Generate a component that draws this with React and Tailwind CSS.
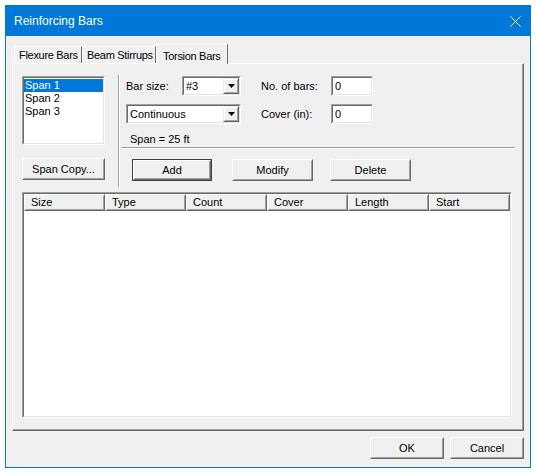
import React from 'react'

const font = { fontFamily: '"Liberation Sans", Arial, sans-serif' }

const Raised = ({ className = '', children, isDefault = false }) => {
  const inner = (
    <div className="w-full h-full border border-t-white border-l-white border-r-[#696969] border-b-[#696969]">
      <div className="w-full h-full border border-t-[#f0f0f0] border-l-[#f0f0f0] border-r-[#a0a0a0] border-b-[#a0a0a0] flex items-center justify-center text-[11px] text-black leading-none whitespace-nowrap">
        {children}
      </div>
    </div>
  )
  if (isDefault) {
    return <div className={`border border-[#404040] bg-[#f0f0f0] ${className}`}>{inner}</div>
  }
  return <div className={`bg-[#f0f0f0] ${className}`}>{inner}</div>
}

const Sunken = ({ className = '', children }) => (
  <div className={`border border-t-[#a0a0a0] border-l-[#a0a0a0] border-r-white border-b-white ${className}`}>
    <div className="w-full h-full border border-t-[#696969] border-l-[#696969] border-r-[#e3e3e3] border-b-[#e3e3e3] bg-white">
      {children}
    </div>
  </div>
)

const Combo = ({ value, width }) => (
  <Sunken className={`${width} h-[20px]`}>
    <div className="flex h-full items-center">
      <span className="flex-1 pl-[2px] text-[11px] leading-none">{value}</span>
      <div className="w-[16px] h-[16px] border border-t-[#f0f0f0] border-l-[#f0f0f0] border-r-[#696969] border-b-[#696969]">
        <div className="w-full h-full border border-t-white border-l-white border-r-[#a0a0a0] border-b-[#a0a0a0] bg-[#f0f0f0] flex items-center justify-center">
          <svg width="7" height="4" viewBox="0 0 7 4">
            <path d="M0 0h7L3.5 4z" fill="#000" />
          </svg>
        </div>
      </div>
    </div>
  </Sunken>
)

const TextBox = ({ value }) => (
  <Sunken className="w-[42px] h-[20px]">
    <div className="flex h-full items-center pl-[2px] text-[11px] leading-none">{value}</div>
  </Sunken>
)

const columns = ['Size', 'Type', 'Count', 'Cover', 'Length', 'Start']

export default function App() {
  return (
    <div className="w-[536px] h-[473px] bg-white pt-[5px] pl-[5px] text-black whitespace-nowrap" style={font}>
      <div className="w-[526px] h-[463px] border border-[#0078d7] bg-[#f0f0f0] flex flex-col">
        {/* Title bar */}
        <div className="h-[30px] bg-[#0078d7] flex items-center justify-between pl-[8px] pr-[9px]">
          <span className="text-white text-[12px]">Reinforcing Bars</span>
          <svg width="11" height="11" viewBox="0 0 11 11">
            <path d="M0.5 0.5l10 10M10.5 0.5l-10 10" stroke="#fff" strokeWidth="1" />
          </svg>
        </div>

        {/* Tabs */}
        <div className="flex items-end h-[19px] mt-[8px] ml-[6px] text-[11px] tracking-[-0.3px]">
          <div className="ml-[2px] w-[68px] h-[17px] border-t border-l border-t-white border-l-white border-r border-r-[#696969] flex items-center pl-[4px]">
            Flexure Bars
          </div>
          <div className="w-[74px] h-[17px] border-t border-l border-t-white border-l-white border-r border-r-[#696969] flex items-center pl-[4px]">
            Beam Stirrups
          </div>
          <div className="relative z-10 -mb-px w-[72px] h-[20px] bg-[#f0f0f0] border-t border-l border-t-white border-l-white border-r border-r-[#696969] flex items-start pt-[3px] pl-[6px]">
            Torsion Bars
          </div>
        </div>

        {/* Panel */}
        <div className="ml-[6px] w-[512px] h-[368px] border-t border-l border-t-white border-l-white border-r border-b border-r-[#696969] border-b-[#696969]">
          <div className="w-full h-full border-r border-b border-r-[#a0a0a0] border-b-[#a0a0a0] pl-[9px] pt-[12px] text-[11px]">
            <div className="flex h-[116px]">
              {/* Left column */}
              <div className="w-[83px] flex flex-col">
                <Sunken className="w-[83px] h-[69px]">
                  <div className="pt-px leading-[13px]">
                    <div className="bg-[#0078d7] text-white pl-[1px] h-[13px]">Span 1</div>
                    <div className="pl-[1px] h-[13px]">Span 2</div>
                    <div className="pl-[1px] h-[13px]">Span 3</div>
                  </div>
                </Sunken>
                <Raised className="mt-[13px] w-[83px] h-[22px]">Span Copy...</Raised>
              </div>

              {/* Vertical separator */}
              <div className="ml-[13px] -mt-px w-[2px] h-[112px] border-l border-l-[#a0a0a0] border-r border-r-white" />

              {/* Right section */}
              <div className="flex flex-col w-[395px]">
                <div className="flex items-center pl-[6px] h-[20px]">
                  <span className="w-[56px]">Bar size:</span>
                  <Combo value="#3" width="w-[59px]" />
                  <span className="ml-[20px] w-[70px]">No. of bars:</span>
                  <TextBox value="0" />
                </div>
                <div className="flex items-center pl-[6px] h-[20px] mt-[8px]">
                  <Combo value="Continuous" width="w-[115px]" />
                  <span className="ml-[20px] w-[70px]">Cover (in):</span>
                  <TextBox value="0" />
                </div>
                <div className="pl-[10px] mt-[9px] h-[13px] leading-[13px]">Span = 25 ft</div>
                <div className="ml-px mt-[1px] w-[394px] h-[2px] border-t border-t-[#a0a0a0] border-b border-b-white" />
                <div className="flex mt-[10px] pl-[12px]">
                  <Raised isDefault className="w-[80px] h-[22px]">Add</Raised>
                  <Raised className="ml-[20px] w-[81px] h-[22px]">Modify</Raised>
                  <Raised className="ml-[17px] w-[81px] h-[22px]">Delete</Raised>
                </div>
              </div>
            </div>

            {/* Table */}
            <Sunken className="w-[490px] h-[226px]">
              <div className="flex">
                {columns.map((c) => (
                  <Raised key={c} className="w-[81px] h-[17px]">
                    <span className="w-full pl-[5px] text-left">{c}</span>
                  </Raised>
                ))}
              </div>
            </Sunken>
          </div>
        </div>

        {/* Footer buttons */}
        <div className="flex justify-end pr-[6px] mt-[6px]">
          <Raised className="w-[74px] h-[22px]">OK</Raised>
          <Raised className="ml-[6px] w-[74px] h-[22px]">Cancel</Raised>
        </div>
      </div>
    </div>
  )
}
